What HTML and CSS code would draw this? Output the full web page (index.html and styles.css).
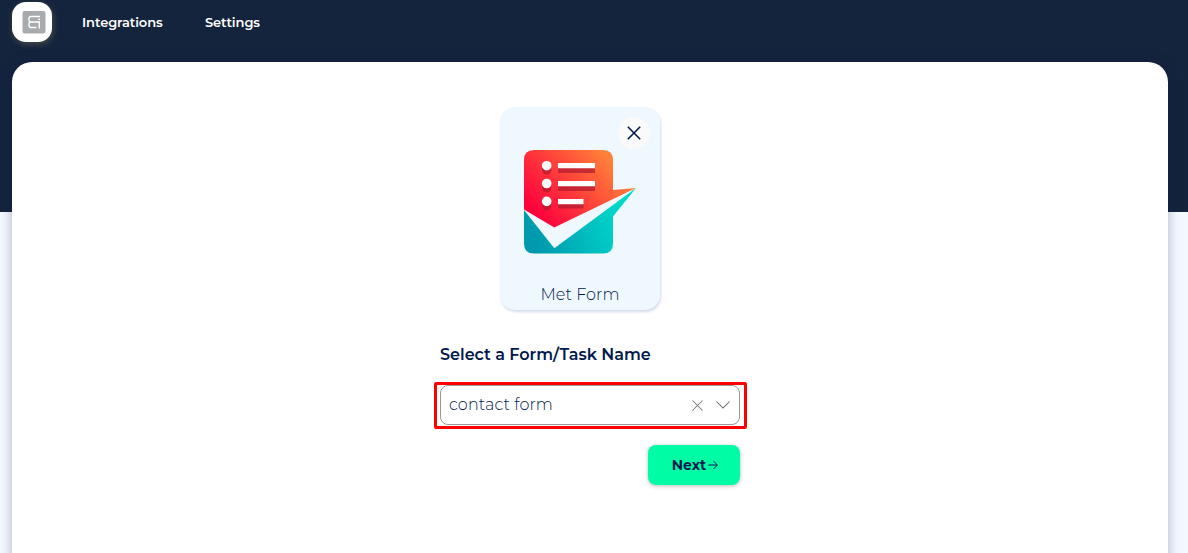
FILE: index.html
```html
<!DOCTYPE html>
<html lang="en">
<head>
<meta charset="utf-8">
<title>Integrations</title>
<link rel="stylesheet" href="styles.css">
</head>
<body>
<div class="app">
  <header class="topbar">
    <div class="logo">
      <svg width="24" height="24" viewBox="0 0 24 24"><rect x=".5" y="1" width="23" height="22.500" rx="2" fill="#a7abae"/><path d="M18 6.500H9q-2 0-2 2v1.500q0 2 2 2H18M9 12q-2 0-2 2v1.500q0 2 2 2H14.500M17.300 12v6.500M16 9.300H18" fill="none" stroke="#fff" stroke-width="1.300"/></svg>
    </div>
    <nav class="nav"><a class="nav-integrations">Integrations</a><a>Settings</a></nav>
  </header>
  <main class="panel">
    <section class="card">
      <button class="close" aria-label="Remove"><svg width="14" height="14" viewBox="0 0 14 14"><path d="M.8.800 13.200 13.200M13.200.800.800 13.200" stroke="#00194d" stroke-width="1.600"/></svg></button>
      <svg class="art" width="112" height="104" viewBox="0 0 112 104">
        <defs>
          <linearGradient id="red" gradientUnits="userSpaceOnUse" x1="8" y1="60" x2="78" y2="0"><stop stop-color="#ff003d"/><stop offset="1" stop-color="#ff8038"/></linearGradient>
          <linearGradient id="teal" gradientUnits="userSpaceOnUse" x1="10" y1="90" x2="92" y2="58"><stop stop-color="#0099ad"/><stop offset="1" stop-color="#00d7cb"/></linearGradient>
        </defs>
        <path d="M10 0H79Q89 0 89 10V40L112 38 30.300 77.500 0 59.500V10Q0 0 10 0Z" fill="url(#red)"/>
        <path d="M0 60 30.300 98.300 112 38 89 66.500V93.500Q89 103.500 79 103.500H10Q0 103.500 0 93.500Z" fill="url(#teal)"/>
        <g fill="#b51c30" opacity=".75"><circle cx="22.700" cy="20" r="4.700"/><circle cx="22.700" cy="38" r="4.700"/><circle cx="22.700" cy="55.800" r="4.700"/><path d="M34 18h37v5H34zM34 36h37v5H34zM34 54h25.500v4.500H34z"/></g>
        <g fill="#fff"><circle cx="22.700" cy="15.700" r="4.800"/><circle cx="22.700" cy="33.500" r="4.800"/><circle cx="22.700" cy="51.400" r="4.800"/><path d="M34 13h37v5.300H34zM34 31h37v5.300H34zM34 49h25.500v5.300H34z"/></g>
      </svg>
      <div class="card-name">Met Form</div>
    </section>
    <div class="form">
      <div class="label">Select a Form/Task Name</div>
      <div class="highlight">
        <div class="select">
          <span class="value">contact form</span>
          <svg class="clear" width="11" height="11" viewBox="0 0 11 11"><path d="M.5.500 10.500 10.500M10.500.500.500 10.500" stroke="#777" stroke-width="1.050"/></svg>
          <svg width="14" height="8" viewBox="0 0 14 8"><path d="M.5.500 7 7 13.500.500" fill="none" stroke="#686868" stroke-width="1.050"/></svg>
        </div>
      </div>
      <button class="next"><span class="next-text">Next</span><svg width="10" height="10" viewBox="0 0 10 10"><path d="M.3 5H9.300M5.500 1 9.300 5 5.500 9" fill="none" stroke="#00194d" stroke-width="1"/></svg></button>
    </div>
  </main>
</div>
</body>
</html>
```
FILE: styles.css
```css
* { box-sizing: border-box; }
body {
  margin: 0;
  font-family: Montserrat, Inter, sans-serif;
  color: #00194d;
}
.app {
  height: 553px;
  overflow: hidden;
  background: linear-gradient(#14243d 212px, #f4f8ff 212px);
}
.topbar {
  display: flex;
  height: 62px;
  padding: 2px 12px 0;
}
.logo {
  display: flex;
  align-items: center;
  justify-content: center;
  width: 40px;
  height: 40px;
  border-radius: 14px;
  background: #fff;
  padding-left: 3px;
  box-shadow: 1px 2px 6px #4b4b4b;
}
.nav {
  display: flex;
  gap: 42px;
  margin-left: 30px;
  height: 40px;
  line-height: 40px;
  font-size: 13px;
  font-weight: 600;
  letter-spacing: -.07px;
  color: #fff;
}
.nav-integrations { width: 81px; }
.panel {
  display: flex;
  flex-direction: column;
  align-items: center;
  width: 1156px;
  height: 520px;
  margin-left: 12px;
  padding: 45px 20px 0 0;
  border-radius: 20px;
  background: #fff;
  box-shadow: 0 0 14px -2px rgba(19, 16, 75, .4);
}
.card {
  display: flex;
  flex-direction: column;
  width: 160px;
  height: 203px;
  padding: 10px 10px 0 24px;
  border-radius: 15px;
  background: #eff7ff;
  box-shadow: 1px 2px 3px #d4dced;
}
.close {
  display: flex;
  align-items: center;
  justify-content: center;
  align-self: flex-end;
  width: 32px;
  height: 32px;
  padding: 0;
  border: 0;
  border-radius: 50%;
  background: #fafafa;
}
.art { display: block; margin-top: 1px; flex-shrink: 0; }
.card-name {
  margin: 31px 0 0 -14px;
  text-align: center;
  font-size: 16px;
  font-weight: 300;
  line-height: 20px;
  letter-spacing: .1px;
}
.form {
  display: flex;
  flex-direction: column;
  width: 300px;
  margin: 35px 0 0 20px;
}
.label {
  font-size: 16px;
  font-weight: 600;
  line-height: 20px;
  white-space: nowrap;
}
.highlight {
  width: 313px;
  height: 47px;
  margin: 17px 0 0 -6px;
  padding: 0 3px;
  border: 3px solid red;
  border-radius: 2px;
}
.select {
  display: flex;
  align-items: center;
  width: 300px;
  height: 40px;
  padding: 0 9px 0 8px;
  border: 1px solid #999;
  border-radius: 8px;
}
.value {
  flex: 1;
  padding-bottom: 2px;
  font-size: 16px;
  font-weight: 300;
  letter-spacing: .12px;
}
.clear { margin-right: 13px; }
.next {
  display: flex;
  align-items: center;
  justify-content: center;
  align-self: flex-end;
  width: 92px;
  height: 40px;
  margin-top: 16px;
  padding: 0 0 0 2px;
  border: 0;
  border-radius: 8px;
  background: #00fda6;
  color: #00194d;
  box-shadow: 0 1px 4px #bcbcbc;
  font: 700 14px Montserrat, Inter, sans-serif;
}
.next-text { margin-right: 2px; }
```
